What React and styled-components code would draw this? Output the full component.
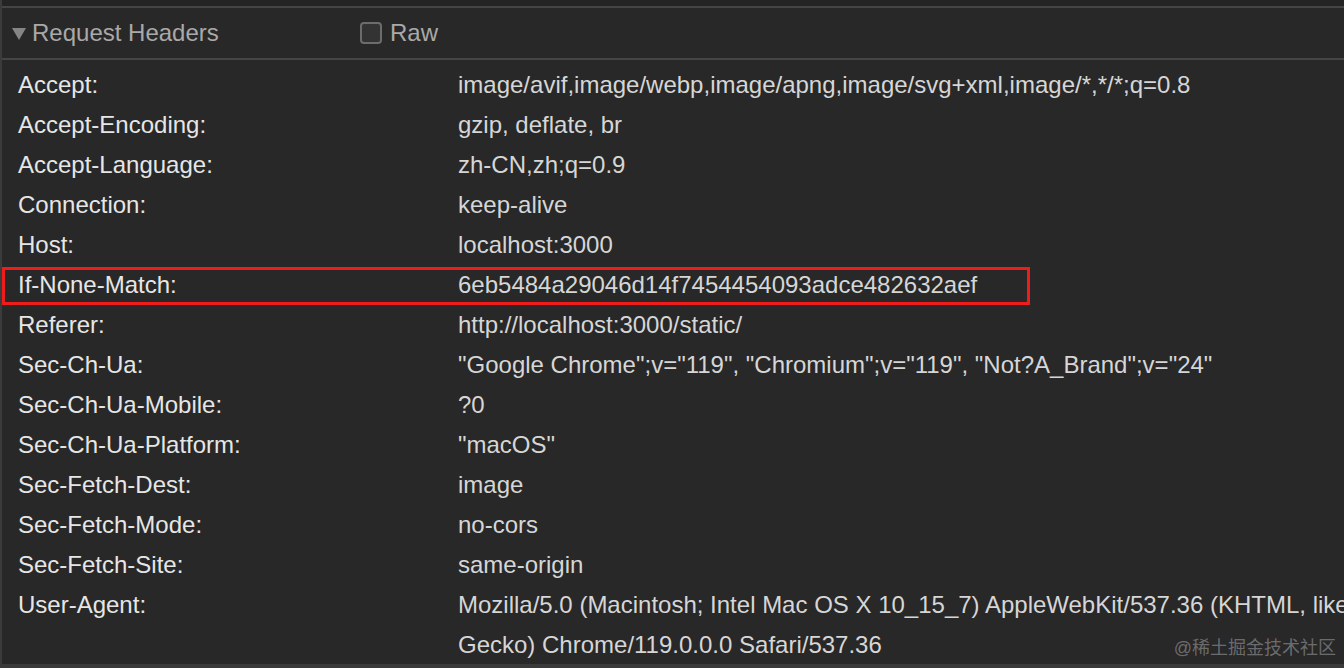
import * as React from "react"
import styled, { createGlobalStyle } from "styled-components"

const headers = [
  ["Accept", "image/avif,image/webp,image/apng,image/svg+xml,image/*,*/*;q=0.8"],
  ["Accept-Encoding", "gzip, deflate, br"],
  ["Accept-Language", "zh-CN,zh;q=0.9"],
  ["Connection", "keep-alive"],
  ["Host", "localhost:3000"],
  ["If-None-Match", "6eb5484a29046d14f7454454093adce482632aef", true],
  ["Referer", "http://localhost:3000/static/"],
  ["Sec-Ch-Ua", `"Google Chrome";v="119", "Chromium";v="119", "Not?A_Brand";v="24"`],
  ["Sec-Ch-Ua-Mobile", "?0"],
  ["Sec-Ch-Ua-Platform", `"macOS"`],
  ["Sec-Fetch-Dest", "image"],
  ["Sec-Fetch-Mode", "no-cors"],
  ["Sec-Fetch-Site", "same-origin"],
  [
    "User-Agent",
    "Mozilla/5.0 (Macintosh; Intel Mac OS X 10_15_7) AppleWebKit/537.36 (KHTML, like Gecko) Chrome/119.0.0.0 Safari/537.36",
  ],
]

const GlobalStyle = createGlobalStyle`
  body {
    margin: 0;
    background: #282828;
    font-family: "Liberation Sans", Arial, sans-serif;
  }
`

const Panel = styled.div`
  position: relative;
  width: 1344px;
  height: 668px;
  box-sizing: border-box;
  overflow: hidden;
  background: #282828;
  border-left: 2px solid #3b3b3b;
  border-bottom: 4px solid #3a3a3a;
`

const TopStrip = styled.div`
  height: 6px;
  background: #242424;
  border-bottom: 2px solid #454545;
`

const SectionHeader = styled.div`
  display: flex;
  align-items: center;
  height: 50px;
  padding-left: 10px;
  border-bottom: 2px solid #454545;
  color: #a9a9a9;
  font-size: 24px;
`

const Caret = styled.span`
  width: 0;
  height: 0;
  margin-right: 6px;
  margin-top: 2px;
  border-left: 7px solid transparent;
  border-right: 7px solid transparent;
  border-top: 12px solid #858585;
`

const Title = styled.span`
  width: 328px;
`

const Check = styled.span`
  width: 18px;
  height: 18px;
  margin-right: 8px;
  border: 2px solid #6c6c6c;
  border-radius: 4px;
  background: #333333;
`

const List = styled.div`
  padding-top: 5px;
`

const Row = styled.div`
  position: relative;
  display: grid;
  grid-template-columns: 440px 920px;
  padding-left: 16px;
  font-size: 24px;
  line-height: 40px;
`

const Name = styled.span`
  color: #e6e6e6;
`

const Value = styled.span`
  color: #d6d6d6;
`

const Highlight = styled.span`
  position: absolute;
  left: 0;
  top: 2px;
  width: 1028px;
  height: 38px;
  box-sizing: border-box;
  border: 3px solid #f01b1b;
  pointer-events: none;
`

const Watermark = styled.span`
  position: absolute;
  right: 8px;
  bottom: 2px;
  font-family: "Liberation Sans", "Noto Sans CJK SC", sans-serif;
  font-size: 18px;
  line-height: 28px;
  color: rgba(255, 255, 255, 0.32);
`

const App = () => (
  <Panel>
    <GlobalStyle />
    <TopStrip />
    <SectionHeader>
      <Caret />
      <Title>Request Headers</Title>
      <Check />
      <span>Raw</span>
    </SectionHeader>
    <List>
      {headers.map(([name, value, marked]) => (
        <Row key={name}>
          <Name>{name}:</Name>
          <Value>{value}</Value>
          {marked && <Highlight />}
        </Row>
      ))}
    </List>
    <Watermark>@稀土掘金技术社区</Watermark>
  </Panel>
)

export default App
